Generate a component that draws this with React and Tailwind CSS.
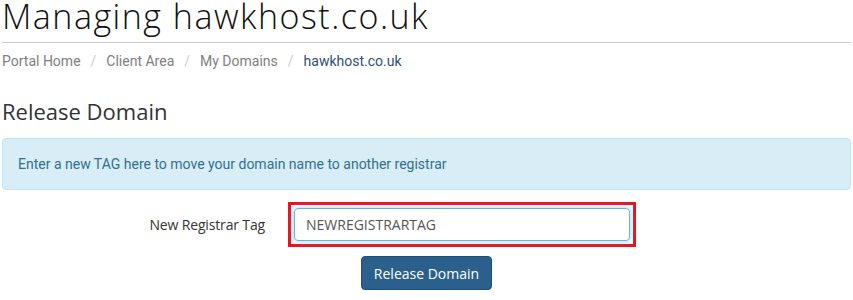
import React from "react";

const crumbs = ["Portal Home", "Client Area", "My Domains"];

const App = () => {
  return (
    <div className="w-[853px] h-[300px] bg-white px-[2px] overflow-hidden">
      <h1
        className="text-[34px] leading-[32px] pb-[10px] font-light text-[#111] tracking-[1.5px] border-b border-[#cccccc]"
        style={{ fontFamily: '"Open Sans", sans-serif' }}
      >
        Managing hawkhost.co.uk
      </h1>

      <ol
        className="flex items-center h-[37px] text-[14px] text-[#808080]"
        style={{ fontFamily: "Roboto, sans-serif" }}
      >
        {crumbs.map((c) => (
          <li key={c} className="flex items-center">
            <span>{c}</span>
            <span className="text-[#ccc] px-[10px]">/</span>
          </li>
        ))}
        <li className="text-[#31506f]">hawkhost.co.uk</li>
      </ol>

      <h2
        className="mt-[18px] text-[22px] leading-[26px] text-[#333]"
        style={{ fontFamily: '"Open Sans", sans-serif' }}
      >
        Release Domain
      </h2>

      <div
        className="mt-[14px] h-[52px] flex items-center px-[15px] rounded bg-[#d9edf7] border border-[#bce8f1] text-[#31708f] text-[14px]"
        style={{ fontFamily: "Roboto, sans-serif" }}
      >
        Enter a new TAG here to move your domain name to another registrar
      </div>

      <div
        className="mt-[12px] flex items-center"
        style={{ fontFamily: '"Open Sans", sans-serif' }}
      >
        <label className="w-[264px] text-right text-[14px] text-[#333] tracking-[-0.15px] pr-[1px]">
          New Registrar Tag
        </label>
        <div className="ml-[22px] border-[3px] border-[#e8141e] p-[3px]">
          <input
            readOnly
            value="NEWREGISTRARTAG"
            className="w-[336px] h-[33px] px-[11px] text-[14px] text-[#555] rounded border border-[#66afe9] outline-none shadow-[0_0_6px_rgba(102,175,233,0.6)]"
            style={{ fontFamily: '"Open Sans", sans-serif' }}
          />
        </div>
      </div>

      <div className="mt-[9px] flex justify-center">
        <button
          className="w-[131px] h-[34px] rounded bg-[#2b5f8c] border border-[#204d74] text-white text-[14px]"
          style={{ fontFamily: '"Open Sans", sans-serif' }}
        >
          Release Domain
        </button>
      </div>
    </div>
  );
};

export default App;
